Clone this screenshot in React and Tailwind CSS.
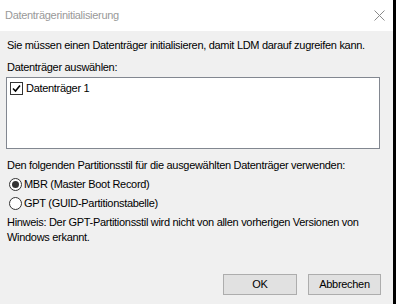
export default function App() {
  return (
    <div className="w-[396px] h-[304px] flex bg-black overflow-hidden">
      <div
        className="w-[393px] h-full flex flex-col bg-[#f0f0f0] text-[11px] leading-[15px] tracking-[-0.3px] text-black"
        style={{ fontFamily: '"Liberation Sans", Arial, sans-serif' }}
      >
        <div className="h-[31px] shrink-0 bg-white flex items-center justify-between pl-[5px] pr-[8px]">
          <span className="text-[#999999] text-[11px] tracking-[-0.3px]">Datenträgerinitialisierung</span>
          <svg width="11" height="11" viewBox="0 0 11 11">
            <path d="M0.5 0.5 L10.5 10.5 M10.5 0.5 L0.5 10.5" stroke="#8a8a8a" strokeWidth="1" />
          </svg>
        </div>

        <div className="flex flex-col px-[6px]">
          <p className="mt-[7px] pl-[1px] whitespace-nowrap">Sie müssen einen Datenträger initialisieren, damit LDM darauf zugreifen kann.</p>
          <p className="mt-[7px] pl-[1px]">Datenträger auswählen:</p>
          <div className="mt-[2px] w-[374px] h-[72px] bg-white border border-[#828790] pl-[3px] pt-[3px]">
            <div className="flex items-center h-[15px]">
              <span className="w-[13px] h-[13px] border border-[#333333] bg-white flex items-center justify-center">
                <svg width="9" height="9" viewBox="0 0 9 9">
                  <path d="M1 4.5 L3.5 7 L8 1.5" stroke="#000" strokeWidth="1.6" fill="none" />
                </svg>
              </span>
              <span className="ml-[3px]">Datenträger 1</span>
            </div>
          </div>

          <p className="mt-[9px] pl-[1px]">Den folgenden Partitionsstil für die ausgewählten Datenträger verwenden:</p>
          <div className="mt-[4px] h-[15px] flex items-center pl-[3px]">
            <span className="w-[13px] h-[13px] rounded-full border border-[#333333] bg-white flex items-center justify-center">
              <span className="w-[7px] h-[7px] rounded-full bg-[#333333]"></span>
            </span>
            <span className="ml-[2px]">MBR (Master Boot Record)</span>
          </div>
          <div className="mt-[4px] h-[15px] flex items-center pl-[3px]">
            <span className="w-[13px] h-[13px] rounded-full border border-[#333333] bg-white"></span>
            <span className="ml-[2px]">GPT (GUID-Partitionstabelle)</span>
          </div>
          <p className="mt-[4px] pl-[1px] pr-[4px]">
            Hinweis: Der GPT-Partitionsstil wird nicht von allen vorherigen Versionen von Windows erkannt.
          </p>
        </div>

        <div className="mt-auto mb-[9px] flex justify-end gap-[11px] pr-[12px]">
          <button className="w-[74px] h-[21px] bg-[#e1e1e1] border border-[#adadad]">OK</button>
          <button className="w-[73px] h-[21px] bg-[#e1e1e1] border border-[#adadad]">Abbrechen</button>
        </div>
      </div>
    </div>
  );
}
